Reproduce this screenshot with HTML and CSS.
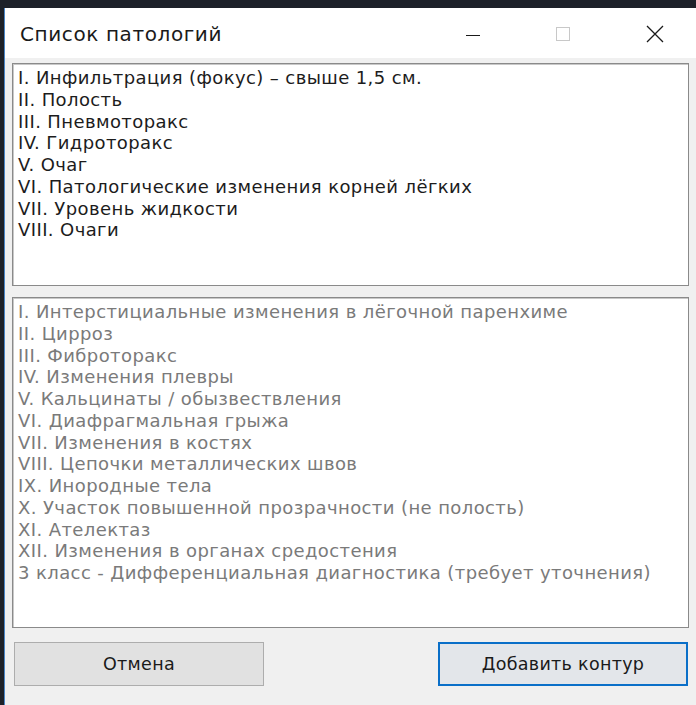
FILE: index.html
```html
<!DOCTYPE html>
<html lang="ru">
<head>
<meta charset="utf-8">
<title>Список патологий</title>
<link rel="stylesheet" href="styles.css">
</head>
<body>
<div class="window">
  <div class="titlebar">
    <span class="title">Список патологий</span>
    <div class="controls">
      <span class="ctl ctl-min"><svg width="16" height="16" viewBox="0 0 16 16"><line x1="1" y1="8.5" x2="15" y2="8.5" stroke="#1a1a1a" stroke-width="1"/></svg></span>
      <span class="ctl ctl-max"><svg width="16" height="16" viewBox="0 0 16 16"><rect x="1.5" y="1.5" width="13" height="13" fill="none" stroke="#c8c8c8" stroke-width="1"/></svg></span>
      <span class="ctl ctl-close"><svg width="20" height="20" viewBox="0 0 20 20"><path d="M2 2 L18 18 M18 2 L2 18" stroke="#1a1a1a" stroke-width="1.3" fill="none"/></svg></span>
    </div>
  </div>
  <div class="client">
    <ul class="list list-main">
      <li>I. Инфильтрация (фокус) – свыше 1,5 см.</li>
      <li>II. Полость</li>
      <li>III. Пневмоторакс</li>
      <li>IV. Гидроторакс</li>
      <li>V. Очаг</li>
      <li>VI. Патологические изменения корней лёгких</li>
      <li>VII. Уровень жидкости</li>
      <li>VIII. Очаги</li>
    </ul>
    <ul class="list list-extra">
      <li>I. Интерстициальные изменения в лёгочной паренхиме</li>
      <li>II. Цирроз</li>
      <li>III. Фиброторакс</li>
      <li>IV. Изменения плевры</li>
      <li>V. Кальцинаты / обызвествления</li>
      <li>VI. Диафрагмальная грыжа</li>
      <li>VII. Изменения в костях</li>
      <li>VIII. Цепочки металлических швов</li>
      <li>IX. Инородные тела</li>
      <li>X. Участок повышенной прозрачности (не полость)</li>
      <li>XI. Ателектаз</li>
      <li>XII. Изменения в органах средостения</li>
      <li>3 класс - Дифференциальная диагностика (требует уточнения)</li>
    </ul>
    <div class="buttons">
      <button class="btn">Отмена</button>
      <button class="btn btn-default">Добавить контур</button>
    </div>
  </div>
</div>
</body>
</html>
```

FILE: styles.css
```css
html, body {
  margin: 0;
  padding: 0;
}

body {
  width: 696px;
  height: 705px;
  overflow: hidden;
  background: #1d2129;
  padding-top: 8px;
  padding-left: 4px;
  box-sizing: border-box;
}

.window {
  height: 697px;
  background: #f0f0f0;
  border-left: 1px solid #4a86c8;
  display: flex;
  flex-direction: column;
}

.titlebar {
  height: 50px;
  background: #ffffff;
  display: flex;
  align-items: center;
  justify-content: space-between;
  flex: none;
}

.title {
  font-family: "DejaVu Sans", Verdana, sans-serif;
  font-size: 20px;
  letter-spacing: 0.6px;
  color: #1a1a1a;
  margin-left: 15px;
  margin-top: 2px;
}

.controls {
  display: flex;
  align-items: center;
  height: 100%;
}

.ctl {
  display: flex;
  align-items: center;
  justify-content: center;
}

.ctl-min { width: 16px; margin-right: 74px; margin-top: 4px; }
.ctl-max { width: 16px; margin-right: 74px; margin-top: 2px; }
.ctl-close { width: 20px; margin-right: 31px; margin-top: 1px; }

.client {
  flex: 1;
  display: flex;
  flex-direction: column;
  padding: 5px 7px 0 7px;
}

.list {
  list-style: none;
  margin: 0;
  background: #ffffff;
  border: 1px solid #8a8a8a;
  box-shadow: inset 1px 1px 0 #c8c8c8;
  font-family: "DejaVu Sans", Verdana, sans-serif;
  font-size: 18px;
  letter-spacing: 0.4px;
  line-height: 21.75px;
  padding: 3px 0 0 5px;
  box-sizing: border-box;
  white-space: nowrap;
  overflow: hidden;
}

.list-main {
  height: 223px;
  color: #1c1c1c;
}

.list-extra {
  height: 331px;
  margin-top: 11px;
  color: #7a7a7a;
}

.buttons {
  display: flex;
  justify-content: space-between;
  margin-top: 14px;
  padding: 0 1px 0 2px;
}

.btn {
  width: 250px;
  height: 44px;
  background: #e1e1e1;
  border: 1px solid #adadad;
  font-family: "DejaVu Sans", Verdana, sans-serif;
  font-size: 17.5px;
  letter-spacing: 0.3px;
  color: #1a1a1a;
  padding: 0;
}

.btn-default {
  border: 2px solid #0a6fc8;
  background: #e3e6ea;
}
```
